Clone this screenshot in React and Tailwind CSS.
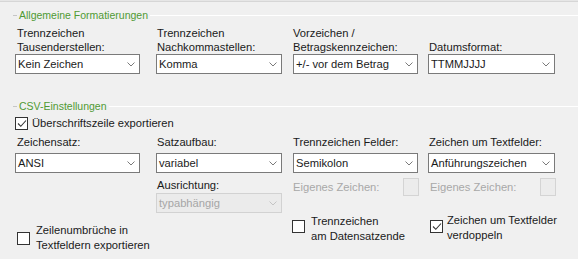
import React from 'react';

const Chevron = ({ disabled }) => (
  <svg width="8" height="5" viewBox="0 0 8 5" className="shrink-0">
    <path d="M0.5 0.5 L4 4 L7.5 0.5" fill="none" stroke={disabled ? '#c4c4c4' : '#7a7a7a'} strokeWidth="1" />
  </svg>
);

const Select = ({ value, width, disabled }) => (
  <div
    className={`flex h-[20px] items-center justify-between pl-[2px] pr-[4px] border ${
      disabled ? 'bg-[#ebebeb] border-[#d2d2d2] text-[#a6a6a6]' : 'bg-white border-[#7a7a7a] text-[#1a1a1a]'
    }`}
    style={{ width }}
  >
    <span>{value}</span>
    <Chevron disabled={disabled} />
  </div>
);

const Checkbox = ({ checked }) => (
  <div className="w-[13px] h-[13px] shrink-0 border border-[#333] bg-white flex items-center justify-center">
    {checked && (
      <svg width="10" height="9" viewBox="0 0 10 9">
        <path d="M1 4.5 L3.8 7.3 L9 1.5" fill="none" stroke="#333" strokeWidth="1.1" />
      </svg>
    )}
  </div>
);

const GroupHeader = ({ title }) => (
  <div className="flex items-center h-[14px] pl-[13px]">
    <div className="w-[4px] h-px bg-[#c6c6c6]" />
    <span className="px-[2px] text-[10.5px] text-[#4f9a33] leading-[14px]">{title}</span>
    <div className="flex-1 h-px bg-[#c6c6c6] border-b border-white" />
  </div>
);

const cols = 'grid grid-cols-[141px_137px_135px_127px] pl-[15px]';

export default function App() {
  return (
    <div
      className="w-[578px] h-[259px] bg-[#f0f0f0] text-[11.2px] text-[#1a1a1a] overflow-hidden"
      style={{ fontFamily: '"Liberation Sans", Arial, sans-serif' }}
    >
      <div className="h-px bg-[#e6e6e6]" />
      <div className="h-px bg-[#d6d6d6]" />

      {/* Allgemeine Formatierungen */}
      <div className="mt-[6px]">
        <GroupHeader title="Allgemeine Formatierungen" />
      </div>
      <div className={`${cols} mt-[4px] items-end leading-[14px]`}>
        <div className="flex flex-col">
          <span className="pl-[2px]">Trennzeichen</span>
          <span className="pl-[2px]">Tausenderstellen:</span>
          <Select value="Kein Zeichen" width={125} />
        </div>
        <div className="flex flex-col">
          <span className="pl-[1px]">Trennzeichen</span>
          <span className="pl-[1px]">Nachkommastellen:</span>
          <Select value="Komma" width={126} />
        </div>
        <div className="flex flex-col">
          <span>Vorzeichen /</span>
          <span>Betragskennzeichen:</span>
          <Select value="+/- vor dem Betrag" width={125} />
        </div>
        <div className="flex flex-col">
          <span className="pl-[1px]">Datumsformat:</span>
          <Select value="TTMMJJJJ" width={127} />
        </div>
      </div>

      {/* CSV-Einstellungen */}
      <div className="mt-[25px]">
        <GroupHeader title="CSV-Einstellungen" />
      </div>
      <div className="flex items-center gap-[4px] pl-[15px] mt-[3px] h-[14px]">
        <Checkbox checked />
        <span>Überschriftszeile exportieren</span>
      </div>

      <div className={`${cols} mt-[5px] leading-[14px]`}>
        <div className="flex flex-col gap-[4px]">
          <span className="pl-[2px]">Zeichensatz:</span>
          <Select value="ANSI" width={125} />
        </div>
        <div className="flex flex-col gap-[4px]">
          <span className="pl-[1px]">Satzaufbau:</span>
          <Select value="variabel" width={126} />
        </div>
        <div className="flex flex-col gap-[4px]">
          <span>Trennzeichen Felder:</span>
          <Select value="Semikolon" width={125} />
        </div>
        <div className="flex flex-col gap-[4px]">
          <span className="pl-[1px]">Zeichen um Textfelder:</span>
          <Select value="Anführungszeichen" width={127} />
        </div>
      </div>

      <div className={`${cols} mt-[5px] leading-[14px]`}>
        <div />
        <div className="flex flex-col gap-[1px]">
          <span className="pl-[1px]">Ausrichtung:</span>
          <Select value="typabhängig" width={126} disabled />
        </div>
        <div className="flex items-center justify-between w-[126px] h-[18px] text-[#a8a8a8]">
          <span>Eigenes Zeichen:</span>
          <div className="w-[16px] h-[18px] border border-[#d4d4d4] bg-[#ececec]" />
        </div>
        <div className="flex items-center justify-between w-[128px] h-[18px] text-[#a8a8a8]">
          <span className="pl-[2px]">Eigenes Zeichen:</span>
          <div className="w-[16px] h-[18px] border border-[#d4d4d4] bg-[#ececec]" />
        </div>
      </div>

      <div className={`${cols} leading-[15px] whitespace-nowrap`}>
        <div className="flex items-center gap-[6px] pl-[2px] mt-[10px]">
          <Checkbox />
          <div className="flex flex-col">
            <span>Zeilenumbrüche in</span>
            <span>Textfeldern exportieren</span>
          </div>
        </div>
        <div />
        <div className="flex items-start gap-[6px] -ml-[1px] mt-[1px]">
          <div className="mt-[6px]">
            <Checkbox />
          </div>
          <div className="flex flex-col">
            <span>Trennzeichen</span>
            <span>am Datensatzende</span>
          </div>
        </div>
        <div className="flex items-start gap-[4px] pl-[2px]">
          <div className="mt-[7px]">
            <Checkbox checked />
          </div>
          <div className="flex flex-col">
            <span>Zeichen um Textfelder</span>
            <span>verdoppeln</span>
          </div>
        </div>
      </div>
    </div>
  );
}
